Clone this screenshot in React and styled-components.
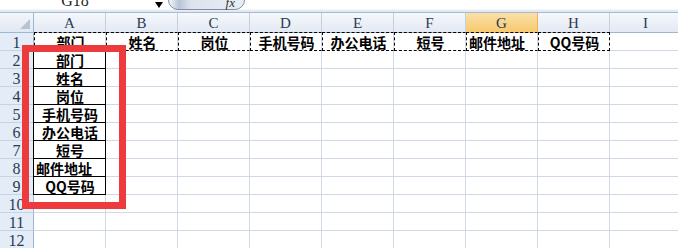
import styled, { createGlobalStyle } from 'styled-components';

const GlobalStyle = createGlobalStyle`
  html, body {
    margin: 0;
    padding: 0;
    background: #ffffff;
    overflow: hidden;
  }
`

const Screen = styled.div`
  position: relative;
  width: 678px;
  height: 248px;
  overflow: hidden;
  background: #ffffff;
`

const FormulaBar = styled.div`
  height: 12px;
  display: flex;
  align-items: flex-start;
  overflow: hidden;
  border-bottom: 1px solid #a9bbd2;
  background: linear-gradient(#ffffff 0, #ffffff 9px, #e9eef5 10px, #dfe6f0 12px);
`

const NameBox = styled.div`
  width: 150px;
  margin-top: -7px;
  text-align: center;
  font-family: "Liberation Serif", serif;
  font-size: 16px;
  line-height: 16px;
  color: #222;
`

const DropArrow = styled.div`
  width: 0;
  height: 0;
  margin: 2px 0 0 5px;
  border-left: 4px solid transparent;
  border-right: 4px solid transparent;
  border-top: 6px solid #000;
`

const FxButton = styled.div`
  width: 77px;
  height: 20px;
  margin: -10px 0 0 5px;
  box-sizing: border-box;
  border: 1px solid #7f8ea3;
  border-radius: 10px;
  background: linear-gradient(90deg, #f7f9fb 0, #b9c5d4 10px, #dde4ee 22px, #e9eef5 100%);
  display: flex;
  justify-content: flex-end;
  align-items: flex-end;
  padding: 0 9px 1px 0;
  font-family: "Liberation Serif", serif;
  font-style: italic;
  font-size: 13px;
  line-height: 11px;
  color: #333;
`

const Sheet = styled.div`
  display: grid;
  grid-template-columns: 34px repeat(9, 72px);
  grid-template-rows: 20px repeat(12, 18px);
`

const Corner = styled.div`
  position: relative;
  box-sizing: border-box;
  background: linear-gradient(#f3f6fb, #e1e8f2);
  border-right: 1px solid #9eb6ce;
  border-bottom: 1px solid #9eb6ce;

  &::after {
    content: '';
    position: absolute;
    right: 3px;
    bottom: 3px;
    width: 0;
    height: 0;
    border-left: 10px solid transparent;
    border-bottom: 10px solid #b6c3d3;
  }
`

const ColHead = styled.div`
  box-sizing: border-box;
  display: flex;
  align-items: center;
  justify-content: center;
  border-right: 1px solid ${({ $active }) => ($active ? '#f0b24f' : '#c3d0e1')};
  border-bottom: 1px solid ${({ $active }) => ($active ? '#f0b24f' : '#9eb6ce')};
  background: ${({ $active }) =>
    $active
      ? 'linear-gradient(#fbe0a8, #f7c96f)'
      : 'linear-gradient(#f5f8fc, #e3e9f3)'};
  font-family: "Liberation Serif", serif;
  font-size: 15px;
  color: #2a3b52;
  padding-top: 1px;
`

const RowHead = styled.div`
  box-sizing: border-box;
  display: flex;
  align-items: center;
  justify-content: center;
  background: #e4ecf7;
  border-right: 1px solid #9eb6ce;
  border-bottom: 1px solid #c5d3e4;
  font-family: "Liberation Serif", serif;
  font-size: 16px;
  color: #2a3b52;
  padding-top: 2px;
`

const Cell = styled.div`
  box-sizing: border-box;
  display: flex;
  align-items: center;
  justify-content: ${({ $align }) => ($align === 'left' ? 'flex-start' : 'center')};
  padding: 1px 1px 0 2px;
  border-right: 1px solid #d0d7e5;
  border-bottom: 1px solid #d0d7e5;
  font-family: "Noto Sans CJK SC", "Liberation Sans", sans-serif;
  font-weight: 700;
  font-size: 14px;
  line-height: 16px;
  color: #000;
  white-space: nowrap;
  overflow: hidden;
`

const HeadCell = styled(Cell)`
  border-top: 1px dashed #000;
  border-bottom: 1px dashed #000;
  border-left: 1px dashed #000;
  border-right: ${({ $last }) => ($last ? '1px dashed #000' : '1px solid #d0d7e5')};
  margin-top: -1px;
`

const ListCell = styled(Cell)`
  border-left: 1px solid #000;
  border-right: 1px solid #000;
  border-bottom: 1px solid #000;
  margin-left: -1px;
`

const Highlight = styled.div`
  position: absolute;
  left: 22px;
  top: 45px;
  width: 104px;
  height: 164px;
  box-sizing: border-box;
  border: 7px solid #ec3a3d;
`

const columns = ['A', 'B', 'C', 'D', 'E', 'F', 'G', 'H', 'I']
const headers = ['部门', '姓名', '岗位', '手机号码', '办公电话', '短号', '邮件地址', 'QQ号码']
const list = ['部门', '姓名', '岗位', '手机号码', '办公电话', '短号', '邮件地址', 'QQ号码']

const App = () => {
  const rows = []
  for (let r = 1; r <= 12; r++) {
    rows.push(<RowHead key={'h' + r}>{r}</RowHead>)
    columns.forEach((c, i) => {
      const key = c + r
      if (r === 1 && i < 8) {
        rows.push(
          <HeadCell key={key} $last={i === 7} $align={headers[i] === '邮件地址' ? 'left' : 'center'}>
            {headers[i]}
          </HeadCell>
        )
      } else if (i === 0 && r >= 2 && r <= 9) {
        const text = list[r - 2]
        rows.push(
          <ListCell key={key} $align={text === '邮件地址' ? 'left' : 'center'}>
            {text}
          </ListCell>
        )
      } else {
        rows.push(<Cell key={key} />)
      }
    })
  }

  return (
    <Screen>
      <GlobalStyle />
      <FormulaBar>
        <NameBox>G18</NameBox>
        <DropArrow />
        <FxButton>fx</FxButton>
      </FormulaBar>
      <Sheet>
        <Corner />
        {columns.map((c) => (
          <ColHead key={c} $active={c === 'G'}>{c}</ColHead>
        ))}
        {rows}
      </Sheet>
      <Highlight />
    </Screen>
  )
}

export default App;
